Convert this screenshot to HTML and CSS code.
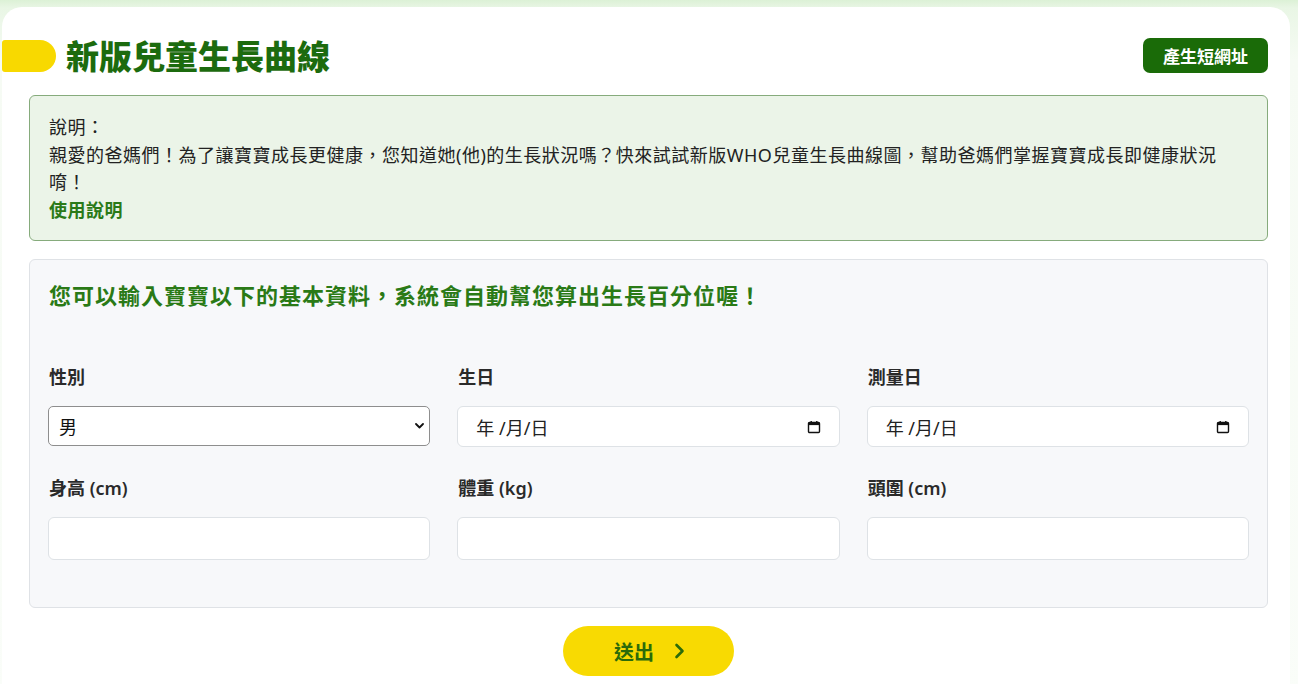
FILE: index.html
```html
<!DOCTYPE html>
<html lang="zh-Hant">
<head>
<meta charset="utf-8">
<title>新版兒童生長曲線</title>
<link rel="stylesheet" href="styles.css">
</head>
<body>
<div class="page">
  <main class="card">
    <header class="head">
      <span class="pill"></span>
      <h1 class="title">新版兒童生長曲線</h1>
      <button class="short-url" type="button">產生短網址</button>
    </header>

    <section class="notice">
      <p>說明：</p>
      <p>親愛的爸媽們！為了讓寶寶成長更健康，您知道她(他)的生長狀況嗎？快來試試新版WHO兒童生長曲線圖，幫助爸媽們掌握寶寶成長即健康狀況<br>唷！</p>
      <a class="guide" href="#">使用說明</a>
    </section>

    <section class="form-box">
      <h2 class="form-title">您可以輸入寶寶以下的基本資料，系統會自動幫您算出生長百分位喔！</h2>
      <div class="grid">
        <div class="field">
          <label class="label">性別</label>
          <div class="select">
            <span>男</span>
            <svg class="chev" width="9" height="6" viewBox="0 0 9 6"><path d="M1 1l3.5 3.5L8 1" fill="none" stroke="#111" stroke-width="1.8" stroke-linecap="round" stroke-linejoin="round"/></svg>
          </div>
        </div>
        <div class="field">
          <label class="label">生日</label>
          <div class="date">
            <span>年 /月/日</span>
            <svg class="cal" width="14" height="14" viewBox="0 0 14 14"><rect x="1.5" y="2.5" width="11" height="10" rx="1" fill="none" stroke="#111" stroke-width="1.4"/><rect x="1.5" y="2.5" width="11" height="2.6" fill="#111"/><rect x="3.5" y="1" width="1.4" height="2" fill="#111"/><rect x="9.1" y="1" width="1.4" height="2" fill="#111"/></svg>
          </div>
        </div>
        <div class="field">
          <label class="label">測量日</label>
          <div class="date">
            <span>年 /月/日</span>
            <svg class="cal" width="14" height="14" viewBox="0 0 14 14"><rect x="1.5" y="2.5" width="11" height="10" rx="1" fill="none" stroke="#111" stroke-width="1.4"/><rect x="1.5" y="2.5" width="11" height="2.6" fill="#111"/><rect x="3.5" y="1" width="1.4" height="2" fill="#111"/><rect x="9.1" y="1" width="1.4" height="2" fill="#111"/></svg>
          </div>
        </div>
        <div class="field">
          <label class="label">身高 (cm)</label>
          <input class="text" type="text">
        </div>
        <div class="field">
          <label class="label">體重 (kg)</label>
          <input class="text" type="text">
        </div>
        <div class="field">
          <label class="label">頭圍 (cm)</label>
          <input class="text" type="text">
        </div>
      </div>
    </section>

    <div class="actions">
      <button class="submit" type="button">
        <span>送出</span>
        <svg width="11" height="16" viewBox="0 0 11 16"><path d="M2.5 2l6 6-6 6" fill="none" stroke="#2b6b0a" stroke-width="2.6" stroke-linecap="round" stroke-linejoin="round"/></svg>
      </button>
    </div>
  </main>
</div>
</body>
</html>
```

FILE: styles.css
```css
* { box-sizing: border-box; }

html, body {
  margin: 0;
  padding: 0;
}

body {
  font-family: "Noto Sans", "Noto Sans CJK TC", sans-serif;
  color: #222;
  background: linear-gradient(180deg, #dcf1d6 0, #e9f6e5 8px, #f6fbf4 60px, #fafdf9 100%);
  min-height: 684px;
  overflow: hidden;
}

.page {
  padding: 7px 8px 0 2px;
}

.card {
  background: #fff;
  border-radius: 20px 20px 0 0;
  padding: 31px 22px 40px 27px;
  min-height: 700px;
}

.head {
  display: flex;
  align-items: center;
  height: 35px;
  margin-left: -27px;
}

.pill {
  width: 54px;
  height: 32px;
  background: #f8d900;
  border-radius: 3px 16px 16px 3px;
  flex: none;
}

.title {
  margin: 0 0 0 10px;
  font-size: 33px;
  line-height: 1.1;
  font-weight: 900;
  color: #1c6b0e;
  font-family: "Noto Sans CJK TC", sans-serif;
  flex: 1;
}

.short-url {
  height: 35px;
  padding: 0 20px;
  border: none;
  border-radius: 7px;
  background: #1a6b08;
  color: #fff;
  font-family: "Noto Sans CJK TC", sans-serif;
  font-size: 17px;
  font-weight: 700;
}

.notice {
  margin-top: 22px;
  background: #ebf4e8;
  border: 1px solid #86ab7c;
  border-radius: 6px;
  padding: 18px 20px 16px 19px;
  font-size: 18px;
  line-height: 27.5px;
  letter-spacing: 0.5px;
}

.notice p {
  margin: 0;
}

.guide {
  display: block;
  color: #2a7a18;
  font-weight: 700;
  text-decoration: none;
}

.form-box {
  margin-top: 18px;
  background: #f7f8fa;
  border: 1px solid #dfe2e6;
  border-radius: 6px;
  padding: 18px 18px 47px 18px;
}

.form-title {
  margin: 0 0 53px 1px;
  font-size: 22px;
  line-height: 33px;
  font-weight: 700;
  color: #2a7a16;
  letter-spacing: 1px;
  font-family: "Noto Sans CJK TC", sans-serif;
}

.grid {
  display: grid;
  grid-template-columns: repeat(3, 1fr);
  column-gap: 27px;
  row-gap: 28px;
}

.field {
  display: flex;
  flex-direction: column;
}

.label {
  font-size: 18px;
  line-height: 27px;
  font-weight: 600;
  color: #2a2a2a;
  margin: 0 0 15px 1px;
}

.select {
  position: relative;
  height: 40px;
  border: 1px solid #8e8e8e;
  border-radius: 5px;
  background: #fff;
  display: flex;
  align-items: center;
  padding: 0 10px;
  font-size: 18px;
  color: #111;
}

.chev {
  position: absolute;
  right: 5px;
  top: 16px;
}

.date {
  height: 41px;
  border: 1px solid #dee2e6;
  border-radius: 6px;
  background: #fff;
  display: flex;
  align-items: center;
  justify-content: space-between;
  padding: 0 18px 0 18px;
  font-size: 18px;
  color: #222;
}

.cal {
  flex: none;
}

.text {
  height: 43px;
  border: 1px solid #dee2e6;
  border-radius: 6px;
  background: #fff;
  font-size: 18px;
  padding: 0 12px;
  outline: none;
}

.actions {
  display: flex;
  justify-content: center;
  margin-top: 18px;
}

.submit {
  width: 171px;
  height: 50px;
  border: none;
  border-radius: 25px;
  background: #f8da02;
  display: flex;
  align-items: center;
  justify-content: center;
  gap: 20px;
  padding: 0 0 0 2px;
  font-family: "Noto Sans CJK TC", sans-serif;
  font-size: 20px;
  font-weight: 700;
  color: #2b6b0a;
}
```
